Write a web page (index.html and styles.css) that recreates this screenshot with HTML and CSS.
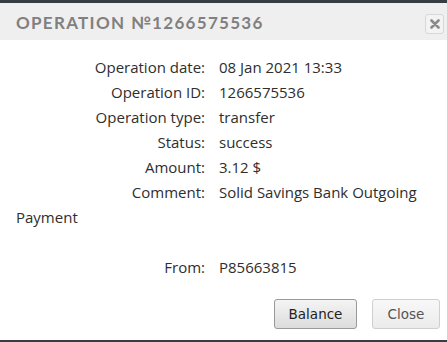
FILE: index.html
```html
<!DOCTYPE html>
<html>
<head>
<meta charset="utf-8">
<link rel="stylesheet" href="styles.css">
</head>
<body>
<div class="dialog">
  <div class="titlebar">
    <span class="title">OPERATION №1266575536</span>
    <button class="x-btn" aria-label="close"><svg width="10" height="10" viewBox="0 0 10 10"><path d="M1.5 1.5 L8.5 8.5 M8.5 1.5 L1.5 8.5" stroke="#8a8a8a" stroke-width="2.6" stroke-linecap="round"/></svg></button>
  </div>
  <div class="content">
    <div class="row"><span class="lbl">Operation date:</span>08 Jan 2021 13:33</div>
    <div class="row"><span class="lbl">Operation ID:</span>1266575536</div>
    <div class="row"><span class="lbl">Operation type:</span>transfer</div>
    <div class="row"><span class="lbl">Status:</span>success</div>
    <div class="row"><span class="lbl">Amount:</span>3.12 $</div>
    <div class="row"><span class="lbl">Comment:</span>Solid Savings Bank Outgoing Payment</div>
    <div class="row empty"></div>
    <div class="row"><span class="lbl">From:</span>P85663815</div>
  </div>
  <div class="buttons">
    <button class="btn btn-balance">Balance</button>
    <button class="btn btn-light">Close</button>
  </div>
</div>
</body>
</html>
```
FILE: styles.css
```css
html, body { margin: 0; padding: 0; }
body {
  width: 447px;
  height: 342px;
  background: #ffffff;
  border-top: 3px solid #363e43;
  border-bottom: 2px solid #363e43;
  box-sizing: border-box;
  overflow: hidden;
}
.dialog { display: flex; flex-direction: column; height: 100%; }
.titlebar {
  height: 37px;
  background: #efefef;
  display: flex;
  align-items: center;
  justify-content: space-between;
  padding: 0 3px 0 16px;
}
.title {
  font-family: "Lato", sans-serif;
  font-size: 17px;
  letter-spacing: 1.3px;
  color: #808080;
  font-weight: 700;
  margin-top: 2px;
}
.x-btn {
  width: 19px;
  height: 20px;
  padding: 0;
  border: 1px solid #d8d8d8;
  border-radius: 3px;
  background: #f3f3f3;
  display: flex;
  align-items: center;
  justify-content: center;
  margin-top: 4px;
}
.content {
  padding: 15px 16px 0 16px;
  font-family: "Open Sans", sans-serif;
  font-size: 15px;
  font-weight: 500;
  line-height: 25px;
  color: #2e2e2e;
  flex: 1;
}
.row { min-height: 25px; }
.lbl {
  display: inline-block;
  width: 189px;
  text-align: right;
  margin-right: 14px;
}
.buttons {
  display: flex;
  justify-content: flex-end;
  gap: 15px;
  padding: 0 7px 11px 0;
}
.btn {
  height: 30px;
  padding: 0;
  font-family: "DejaVu Sans", sans-serif;
  font-size: 13.5px;
  color: #222;
  border: 1px solid #999;
  border-radius: 3px;
  background: linear-gradient(#f4f4f4, #dcdcdc);
}
.btn-balance { width: 83px; }
.btn-light {
  width: 68px;
  color: #555;
  border-color: #cfcfcf;
  background: linear-gradient(#f8f8f8, #ebebeb);
}
```
